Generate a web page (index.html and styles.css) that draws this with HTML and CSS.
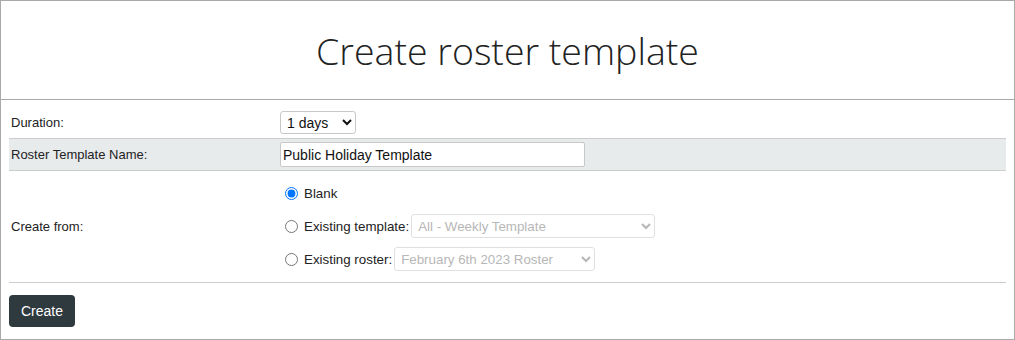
FILE: index.html
```html
<!DOCTYPE html>
<html>
<head>
  <title>Create roster template</title>
  <link rel="stylesheet" href="styles.css">
</head>

<body>
  <div class="page">
    <div class="page-header">
      <h1>Create roster template</h1>
    </div>

    <form class="roster-form">
      <table class="form-table">
        <tr class="row-duration">
          <td class="label-cell">Duration:</td>
          <td>
            <select class="duration-select">
              <option>1 days</option>
              <option>7 days</option>
              <option>14 days</option>
            </select>
          </td>
        </tr>
        <tr class="row-shaded">
          <td class="label-cell">Roster Template Name:</td>
          <td><input type="text" class="name-input" value="Public Holiday Template"></td>
        </tr>
        <tr class="row-create-from">
          <td class="label-cell">Create from:</td>
          <td>
            <div class="option-line">
              <input type="radio" name="source" id="source-blank" checked>
              <label for="source-blank">Blank</label>
            </div>
            <div class="option-line">
              <input type="radio" name="source" id="source-template">
              <label for="source-template">Existing template:</label>
              <select class="source-select template-select" disabled>
                <option>All - Weekly Template</option>
              </select>
            </div>
            <div class="option-line">
              <input type="radio" name="source" id="source-roster">
              <label for="source-roster">Existing roster:</label>
              <select class="source-select roster-select" disabled>
                <option>February 6th 2023 Roster</option>
              </select>
            </div>
          </td>
        </tr>
      </table>

      <button type="button" class="create-btn">Create</button>
    </form>
  </div>
</body>
</html>
```

FILE: styles.css
```css
html,
body {
  margin: 0;
  height: 100%;
}

body {
  font-family: "Liberation Sans", Arial, sans-serif;
  font-size: 13px;
  color: #222;
  background-color: #fff;
}

.page {
  box-sizing: border-box;
  height: 340px;
  border: 1px solid #aaa;
}

.page-header {
  height: 98px;
  border-bottom: 1px solid #aaa;
  display: flex;
  align-items: center;
  justify-content: center;
}

h1 {
  margin: 0;
  font-family: "Open Sans", sans-serif;
  font-weight: 300;
  font-size: 37.5px;
  color: #222;
}

.roster-form {
  padding: 0 8px;
}

.form-table {
  width: 100%;
  border-collapse: collapse;
}

.form-table td {
  padding: 0 2px;
  vertical-align: middle;
}

.label-cell {
  width: 265px;
}

.row-duration td {
  padding-top: 11px;
  padding-bottom: 4px;
}

.row-shaded td {
  background-color: #e8ebec;
  border-top: 1px solid #ccc;
  border-bottom: 1px solid #ccc;
  padding-top: 3px;
  padding-bottom: 3px;
}

.row-create-from td {
  border-bottom: 1px solid #ccc;
  padding-top: 10px;
  padding-bottom: 11px;
}

select {
  font-family: "Liberation Sans", Arial, sans-serif;
  font-size: 14px;
  height: 23px;
  border: 1px solid #c8c8c8;
  border-radius: 3px;
  background-color: #fff;
  color: #111;
  padding: 0 2px;
}

.duration-select {
  width: 76px;
}

.name-input {
  box-sizing: border-box;
  width: 305px;
  height: 25px;
  font-family: "Liberation Sans", Arial, sans-serif;
  font-size: 14px;
  border: 1px solid #c8c8c8;
  border-radius: 2px;
  padding: 1px 2px;
  color: #111;
}

.option-line {
  display: flex;
  align-items: center;
  height: 24px;
  font-size: 13.33px;
}

.option-line + .option-line {
  margin-top: 9px;
}

.option-line input[type="radio"] {
  margin: 0 6px 0 5px;
  width: 13px;
  height: 13px;
}

.option-line label {
  margin-right: 2px;
}

.source-select {
  height: 24px;
  font-size: 13.33px;
  color: #999;
  background-color: #fff;
  border-color: #d4d4d4;
}

.template-select {
  width: 244px;
}

.roster-select {
  width: 201px;
}

.create-btn {
  margin-top: 12px;
  height: 32px;
  padding: 0 12px;
  border: none;
  border-radius: 4px;
  background-color: #2f3a3f;
  color: #fff;
  font-family: "Liberation Sans", Arial, sans-serif;
  font-size: 14px;
  cursor: pointer;
}
```
